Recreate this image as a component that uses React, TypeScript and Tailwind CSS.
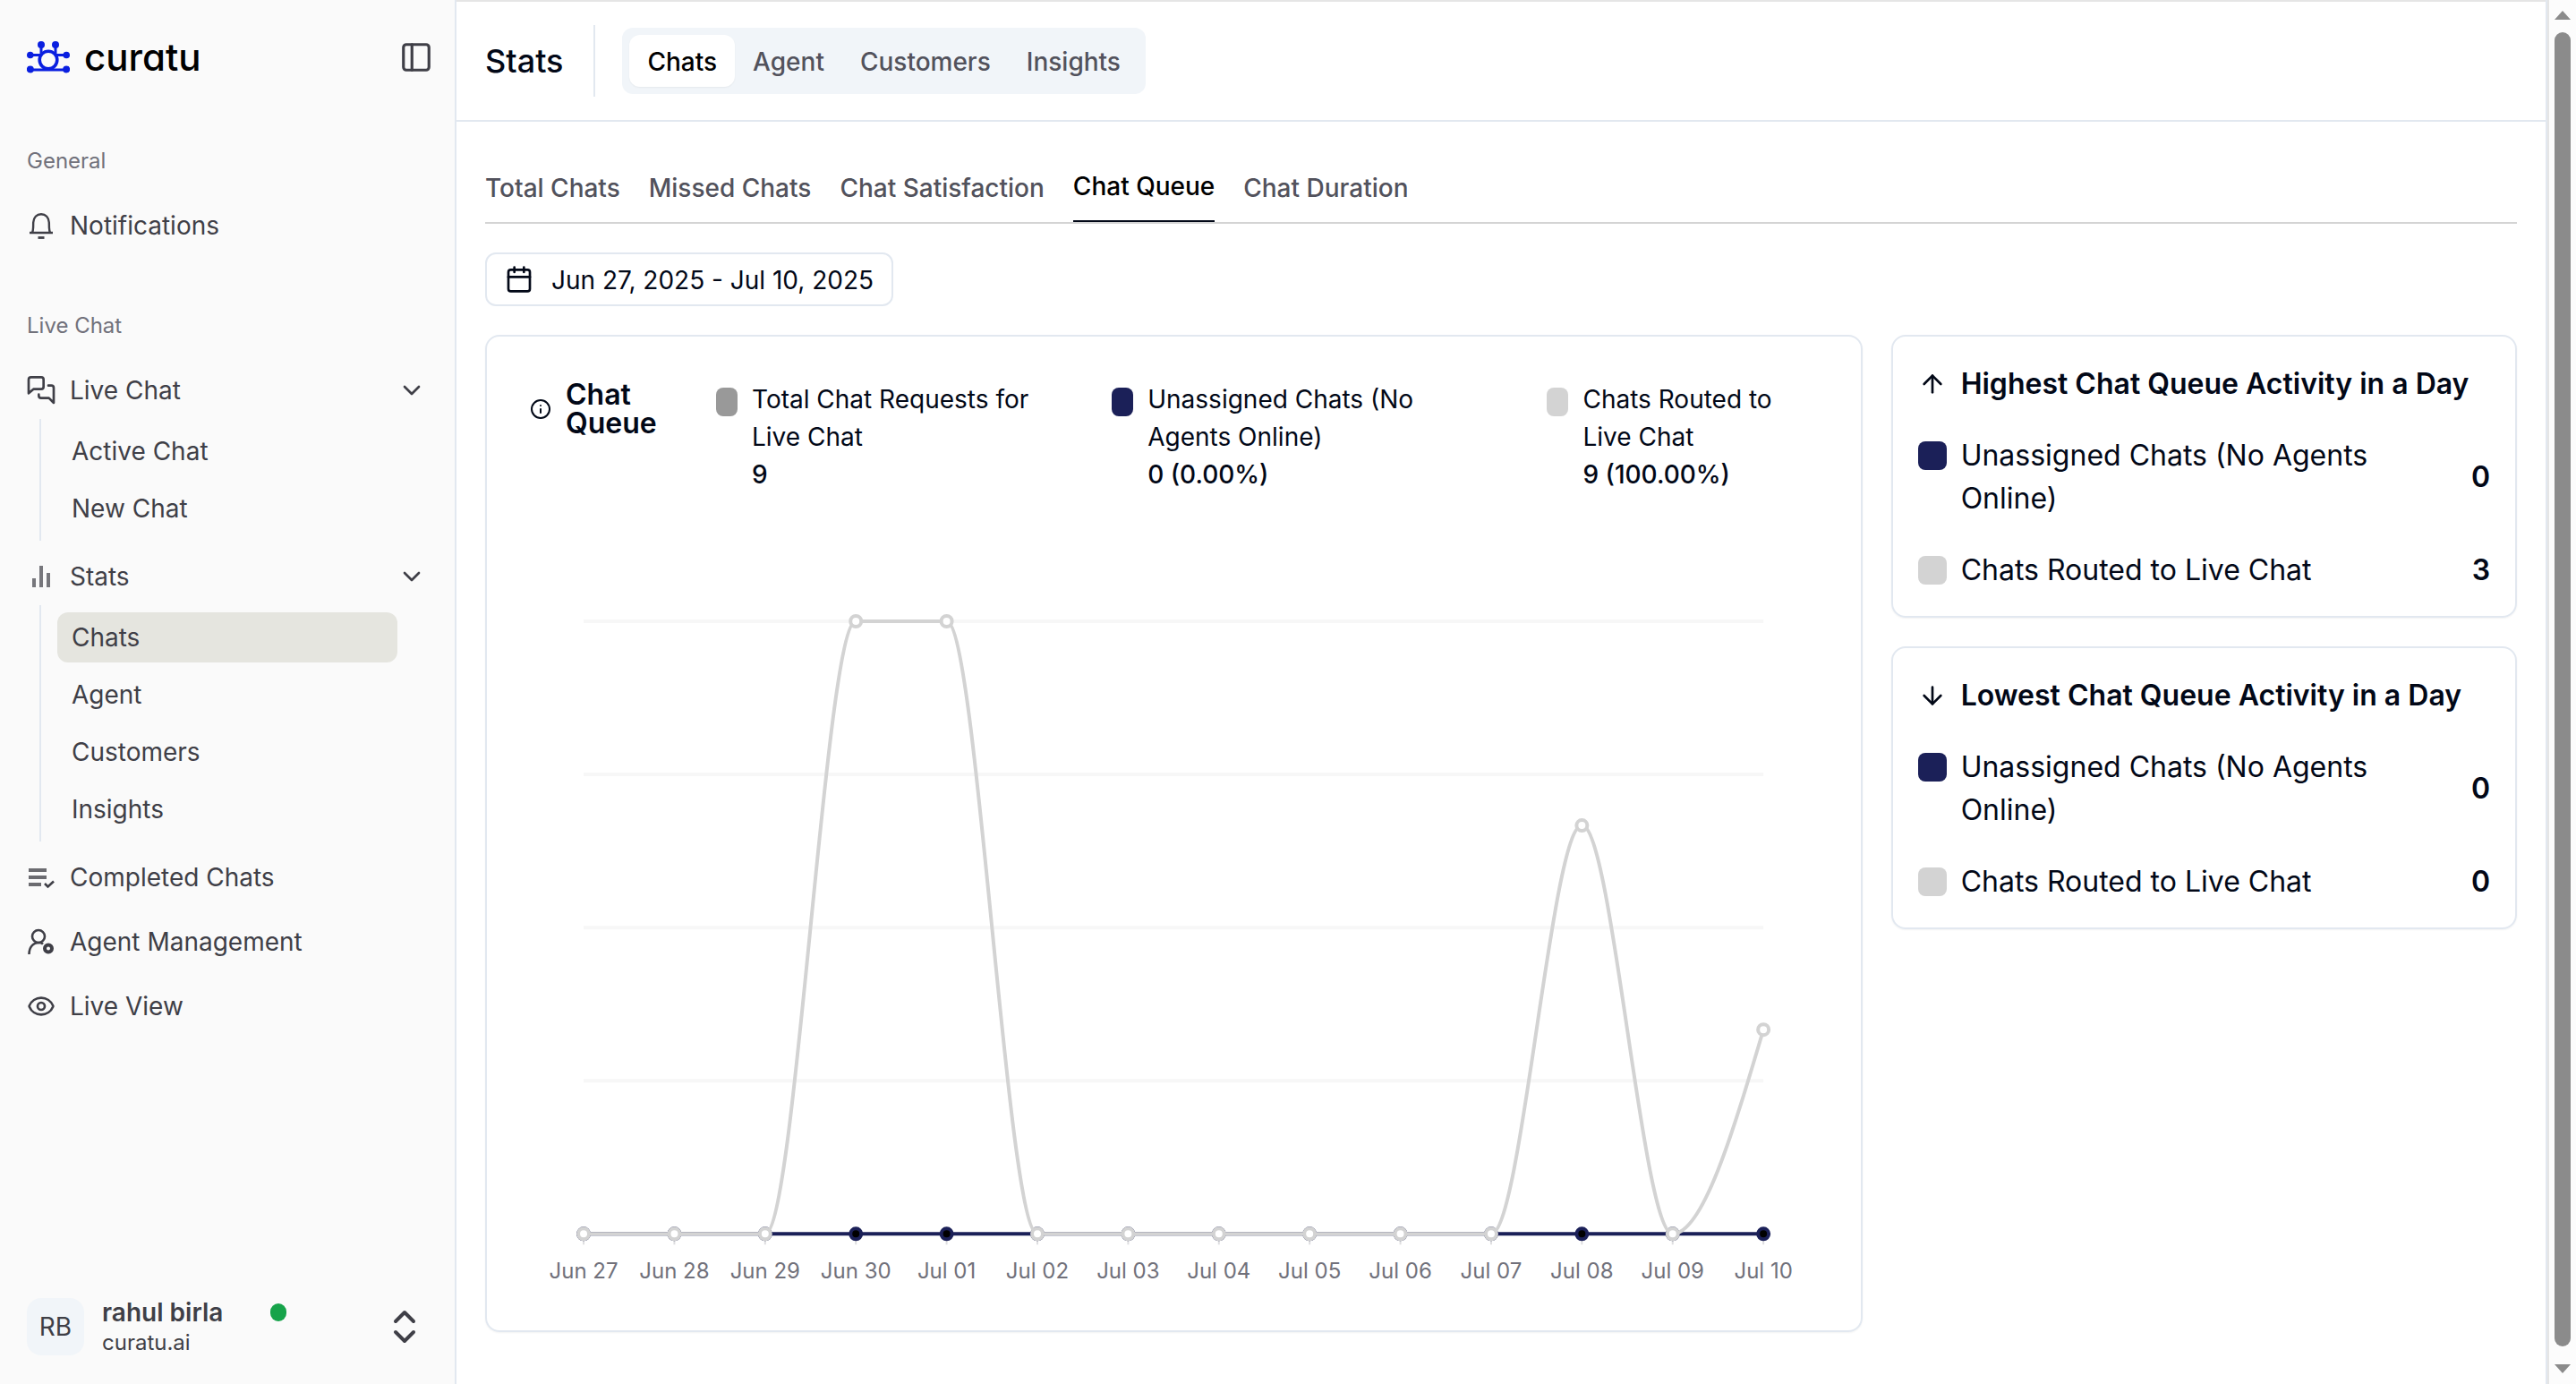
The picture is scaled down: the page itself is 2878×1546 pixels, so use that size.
import type { ReactNode } from "react";
import {
  ArrowDown,
  ArrowUp,
  Calendar,
  ChevronDown,
  ChevronsUpDown,
  Eye,
  Info,
  PanelLeft,
} from "lucide-react";

type Tab = { label: string; active?: boolean };

type LegendItem = { label: string; value: string; color: string };

const statTabs: Tab[] = [
  { label: "Chats", active: true },
  { label: "Agent" },
  { label: "Customers" },
  { label: "Insights" },
];

const chatTabs: Tab[] = [
  { label: "Total Chats" },
  { label: "Missed Chats" },
  { label: "Chat Satisfaction" },
  { label: "Chat Queue", active: true },
  { label: "Chat Duration" },
];

const legend: LegendItem[] = [
  { label: "Total Chat Requests for Live Chat", value: "9", color: "bg-[#999999]" },
  { label: "Unassigned Chats (No Agents Online)", value: "0 (0.00%)", color: "bg-[#1b2058]" },
  { label: "Chats Routed to Live Chat", value: "9 (100.00%)", color: "bg-[#d3d3d3]" },
];

const days = [
  { day: "Jun 27", routed: 0, unassigned: 0 },
  { day: "Jun 28", routed: 0, unassigned: 0 },
  { day: "Jun 29", routed: 0, unassigned: 0 },
  { day: "Jun 30", routed: 3, unassigned: 0 },
  { day: "Jul 01", routed: 3, unassigned: 0 },
  { day: "Jul 02", routed: 0, unassigned: 0 },
  { day: "Jul 03", routed: 0, unassigned: 0 },
  { day: "Jul 04", routed: 0, unassigned: 0 },
  { day: "Jul 05", routed: 0, unassigned: 0 },
  { day: "Jul 06", routed: 0, unassigned: 0 },
  { day: "Jul 07", routed: 0, unassigned: 0 },
  { day: "Jul 08", routed: 2, unassigned: 0 },
  { day: "Jul 09", routed: 0, unassigned: 0 },
  { day: "Jul 10", routed: 1, unassigned: 0 },
];

/* Icons */

function Logo() {
  return (
    <svg viewBox="0 0 48 36" className="h-9 w-12" fill="none" stroke="#0a1fe0" strokeWidth="3">
      <circle cx="24" cy="21" r="9.8" strokeWidth="3.6" />
      <path d="M4 32H44" />
      <path d="M4 15.5H16M32 15.5H44M16 4V14M32 4V14" />
      <g fill="#0a1fe0" stroke="none">
        <circle cx="3.8" cy="15.5" r="3.8" />
        <circle cx="44.2" cy="15.5" r="3.8" />
        <circle cx="3.8" cy="31.5" r="4" />
        <circle cx="44.2" cy="31.5" r="4" />
        <circle cx="16" cy="4" r="4" />
        <circle cx="32" cy="4" r="4" />
      </g>
    </svg>
  );
}

function BellIcon() {
  return (
    <svg viewBox="0 0 32 32" className="size-8" fill="none" stroke="currentColor" strokeWidth="2.4">
      <path d="M3 24H29M6 24C7.5 21 7 17 7.2 12.5C7.5 7 11 3.2 16 3.2S24.5 7 24.8 12.5C25 17 24.5 21 26 24" strokeLinejoin="round" />
      <path d="M12.5 29.5H19.5" strokeWidth="2.8" />
    </svg>
  );
}

function MessagesIcon() {
  return (
    <svg viewBox="0 0 24 24" className="size-8" fill="none" stroke="currentColor" strokeWidth="2" strokeLinecap="round" strokeLinejoin="round">
      <path d="M14 9a2 2 0 0 1-2 2H5.5L1.5 14.5V3c0-1.1.9-2 2-2H12a2 2 0 0 1 2 2v6Z" />
      <path d="M18 8h2.5a2 2 0 0 1 2 2v12.500l-4-4H12a2 2 0 0 1-2-2v-1" />
    </svg>
  );
}

function BarsIcon() {
  return (
    <svg viewBox="0 0 32 32" className="size-8" fill="#77777c">
      <rect x="6" y="18" width="4" height="10" />
      <rect x="14" y="4" width="4" height="24" />
      <rect x="22" y="12" width="4" height="16" />
    </svg>
  );
}

function ListCheckIcon() {
  return (
    <svg viewBox="0 0 32 32" className="size-8" fill="none">
      <path d="M2 8H22M2 16H22M2 24H16" stroke="#6b6b70" strokeWidth="4" />
      <path d="M20 23L23.5 26.5L30 20.5" stroke="currentColor" strokeWidth="2.6" />
    </svg>
  );
}

function UserGearIcon() {
  return (
    <svg viewBox="0 0 32 32" className="size-8" fill="none" stroke="currentColor" strokeWidth="2.6">
      <circle cx="13" cy="10" r="7" />
      <path d="M2.5 30C2.5 22 7 17 13.5 17C15.5 17 17 17.5 18 18.5" />
      <circle cx="24" cy="23.5" r="4" strokeWidth="4" />
    </svg>
  );
}

/* Sidebar */

function NavRow({ icon, label, open }: { icon: ReactNode; label: string; open?: boolean }) {
  if (open) {
    return (
      <button className="flex h-16 w-full items-center gap-4 text-left">
        {icon}
        <span className="flex-1">{label}</span>
        <ChevronDown size={32} />
      </button>
    );
  }
  return (
    <a href="#" className="flex h-16 items-center gap-4">
      {icon}
      <span>{label}</span>
    </a>
  );
}

function SubNav({ items }: { items: Tab[] }) {
  return (
    <ul className="mb-2 ml-[14px] mr-8 space-y-2 border-l-2 border-slate-200 py-2 pl-[18px]">
      {items.map((item) => (
        <li key={item.label}>
          <a
            href="#"
            className={`flex h-14 items-center rounded-xl px-4 ${item.active ? "bg-[#e5e5df]" : ""}`}
          >
            {item.label}
          </a>
        </li>
      ))}
    </ul>
  );
}

function Sidebar() {
  return (
    <aside className="flex w-[510px] shrink-0 flex-col border-r-2 border-slate-200 bg-[#fafafa] pl-[30px] pr-8 text-[28px] leading-10 text-zinc-700">
      <div className="flex h-32 items-center">
        <Logo />
        <span className="ml-4 flex-1 text-[42px] font-medium leading-none text-black [font-feature-settings:'cv11']">
          curatu
        </span>
        <button aria-label="Toggle sidebar" className="-mr-2">
          <PanelLeft size={38} />
        </button>
      </div>

      <nav className="mt-5 flex-1">
        <h2 className="flex h-16 items-center text-2xl text-zinc-500">General</h2>
        <div className="mt-2">
          <NavRow icon={<BellIcon />} label="Notifications" />
        </div>

        <h2 className="mt-12 flex h-16 items-center text-2xl text-zinc-500">Live Chat</h2>
        <div className="mt-2">
          <NavRow icon={<MessagesIcon />} label="Live Chat" open />
          <SubNav items={[{ label: "Active Chat" }, { label: "New Chat" }]} />
          <NavRow icon={<BarsIcon />} label="Stats" open />
          <SubNav items={statTabs} />
        </div>
        <div className="space-y-2">
          <NavRow icon={<ListCheckIcon />} label="Completed Chats" />
          <NavRow icon={<UserGearIcon />} label="Agent Management" />
          <NavRow icon={<Eye size={32} />} label="Live View" />
        </div>
      </nav>

      <button className="mb-8 flex items-center text-left">
        <span className="flex size-16 items-center justify-center rounded-2xl bg-slate-100">RB</span>
        <span className="ml-5 h-16 w-[188px]">
          <span className="block font-semibold leading-8">rahul birla</span>
          <span className="block text-2xl leading-9">curatu.ai</span>
        </span>
        <span className="mt-[6px] h-5 w-[18px] self-start rounded-full bg-[#16a34a]" />
        <ChevronsUpDown size={48} className="ml-auto" />
      </button>
    </aside>
  );
}

/* Chart */

const LEFT = 60;
const STEP = 101.35;
const TOP = 28;
const BASE = 712;

const px = (i: number) => LEFT + i * STEP;
const py = (value: number) => BASE - (value * (BASE - TOP)) / 3;

// monotone cubic through the points, so that the line never overshoots
function monotonePath(values: number[]) {
  const ys = values.map(py);
  const slopes = ys.slice(1).map((y, i) => (y - ys[i]) / STEP);
  const tangents = ys.map((_, i) => {
    if (i === 0 || i === ys.length - 1) return 0;
    const a = slopes[i - 1];
    const b = slopes[i];
    return a * b <= 0 ? 0 : Math.sign(a) * Math.min(Math.abs(a), Math.abs(b), Math.abs(a + b) / 4) * 2;
  });
  const last = ys.length - 1;
  tangents[0] = (3 * slopes[0] - tangents[1]) / 2;
  tangents[last] = (3 * slopes[last - 1] - tangents[last - 1]) / 2;

  const d = STEP / 3;
  return ys.slice(1).reduce((path, y, i) => {
    const x0 = px(i);
    const x1 = px(i + 1);
    return `${path}C${x0 + d},${ys[i] + d * tangents[i]} ${x1 - d},${y - d * tangents[i + 1]} ${x1},${y}`;
  }, `M${px(0)},${ys[0]}`);
}

function Series({ values, color, dotFill }: { values: number[]; color: string; dotFill: string }) {
  return (
    <g stroke={color} strokeWidth="4">
      <path d={monotonePath(values)} fill="none" />
      {values.map((v, i) => (
        <circle key={i} cx={px(i)} cy={py(v)} r="6" fill={dotFill} />
      ))}
    </g>
  );
}

function QueueChart() {
  return (
    <svg viewBox="0 0 1438 780" className="block w-full" role="img" aria-label="Chat queue by day">
      {[0.75, 1.5, 2.25, 3].map((v) => (
        <path key={v} d={`M${px(0)} ${py(v)}H${px(13)}`} stroke="#f7f7f7" strokeWidth="4" />
      ))}
      {days.map((d, i) => (
        <g key={d.day}>
          <path d={`M${px(i)} ${BASE}v12`} stroke="#dedee0" strokeWidth="2" />
          <text x={px(i)} y={762} textAnchor="middle" className="fill-zinc-500 text-2xl">
            {d.day}
          </text>
        </g>
      ))}
      <Series values={days.map((d) => d.unassigned)} color="#1b2058" dotFill="#000" />
      <Series values={days.map((d) => d.routed)} color="#d3d3d3" dotFill="#fff" />
    </svg>
  );
}

/* Content */

function QueueCard() {
  return (
    <section className="rounded-2xl border-2 border-slate-200 px-12 pb-10 shadow-xs">
      <div className="flex pt-[49px]">
        <div className="flex w-[208px] shrink-0 items-center gap-4 self-start">
          <Info size={24} className="shrink-0" />
          <h2 className="w-24 text-[32px] font-semibold leading-8">Chat Queue</h2>
        </div>
        <dl className="grid flex-1 grid-cols-[442fr_486fr_302fr]">
          {legend.map((item) => (
            <div key={item.label} className="flex gap-4 leading-[42px]">
              <span className={`mt-2 h-8 w-6 shrink-0 rounded-lg ${item.color}`} />
              <div>
                <dt className="max-w-80">{item.label}</dt>
                <dd className="font-medium">{item.value}</dd>
              </div>
            </div>
          ))}
        </dl>
      </div>
      <div className="mt-[115px]">
        <QueueChart />
      </div>
    </section>
  );
}

function ActivityCard({
  icon,
  title,
  unassigned,
  routed,
}: {
  icon: ReactNode;
  title: string;
  unassigned: number;
  routed: number;
}) {
  return (
    <section className="space-y-8 rounded-2xl border-2 border-slate-200 px-7 pb-[27px] pt-[29px] text-[32px] leading-[48px] shadow-xs">
      <div className="flex items-center gap-4">
        {icon}
        <h2 className="font-semibold">{title}</h2>
      </div>
      <div className="flex items-center gap-4">
        <span className="mt-2 size-8 shrink-0 self-start rounded-lg bg-[#1b2058]" />
        <span className="max-w-[500px] flex-1">Unassigned Chats (No Agents Online)</span>
        <span className="ml-auto font-semibold">{unassigned}</span>
      </div>
      <div className="flex items-center gap-4">
        <span className="mt-2 size-8 shrink-0 self-start rounded-lg bg-[#d3d3d3]" />
        <span className="flex-1">Chats Routed to Live Chat</span>
        <span className="font-semibold">{routed}</span>
      </div>
    </section>
  );
}

function Header() {
  return (
    <header className="flex h-[136px] items-center border-y-2 border-b-slate-200 border-t-neutral-200 px-8">
      <h1 className="text-4xl font-medium">Stats</h1>
      <div className="ml-[34px] h-20 w-[2px] bg-slate-200" />
      <nav className="ml-[30px] flex h-[74px] items-center rounded-xl bg-slate-100 p-2 font-medium">
        {statTabs.map((tab) => (
          <button
            key={tab.label}
            className={`h-[58px] rounded-xl px-5 pt-[2px] ${
              tab.active ? "bg-white text-black shadow-xs" : "text-zinc-600"
            }`}
          >
            {tab.label}
          </button>
        ))}
      </nav>
    </header>
  );
}

function Scrollbar() {
  return (
    <div className="flex w-8 shrink-0 flex-col items-center border-l-2 border-neutral-200 bg-[#fcfcfc] py-3">
      <svg viewBox="0 0 18 10" className="h-[10px] w-[18px]" fill="#8b8b8b">
        <path d="M9 0L18 10H0Z" />
      </svg>
      <div className="mb-5 mt-[14px] w-[18px] flex-1 rounded-full bg-[#8b8b8b]" />
      <svg viewBox="0 0 18 10" className="h-[10px] w-[18px]" fill="#8b8b8b">
        <path d="M9 10L18 0H0Z" />
      </svg>
    </div>
  );
}

export default function App() {
  return (
    <div className="flex min-h-screen bg-white font-[Inter,sans-serif] text-[28px] leading-10 text-[#020817]">
      <Sidebar />
      <main className="min-w-0 flex-1 border-r-2 border-slate-200">
        <Header />
        <div className="px-8">
          <nav className="mt-[34px] flex h-20 gap-8 border-b-2 border-neutral-300 font-medium">
            {chatTabs.map((tab) => (
              <button
                key={tab.label}
                className={tab.active ? "border-b-2 border-[#020817] text-black" : "pt-[2px] text-zinc-600"}
              >
                {tab.label}
              </button>
            ))}
          </nav>

          <button className="mt-8 flex h-[60px] items-center gap-5 rounded-xl border-2 border-slate-200 px-5">
            <Calendar size={32} />
            <span className="pt-[2px]">Jun 27, 2025 - Jul 10, 2025</span>
          </button>

          <div className="mt-8 grid grid-cols-[11fr_5fr] items-start gap-8">
            <QueueCard />
            <div className="space-y-8">
              <ActivityCard
                icon={<ArrowUp size={32} />}
                title="Highest Chat Queue Activity in a Day"
                unassigned={0}
                routed={3}
              />
              <ActivityCard
                icon={<ArrowDown size={32} />}
                title="Lowest Chat Queue Activity in a Day"
                unassigned={0}
                routed={0}
              />
            </div>
          </div>
        </div>
      </main>
      <Scrollbar />
    </div>
  );
}
